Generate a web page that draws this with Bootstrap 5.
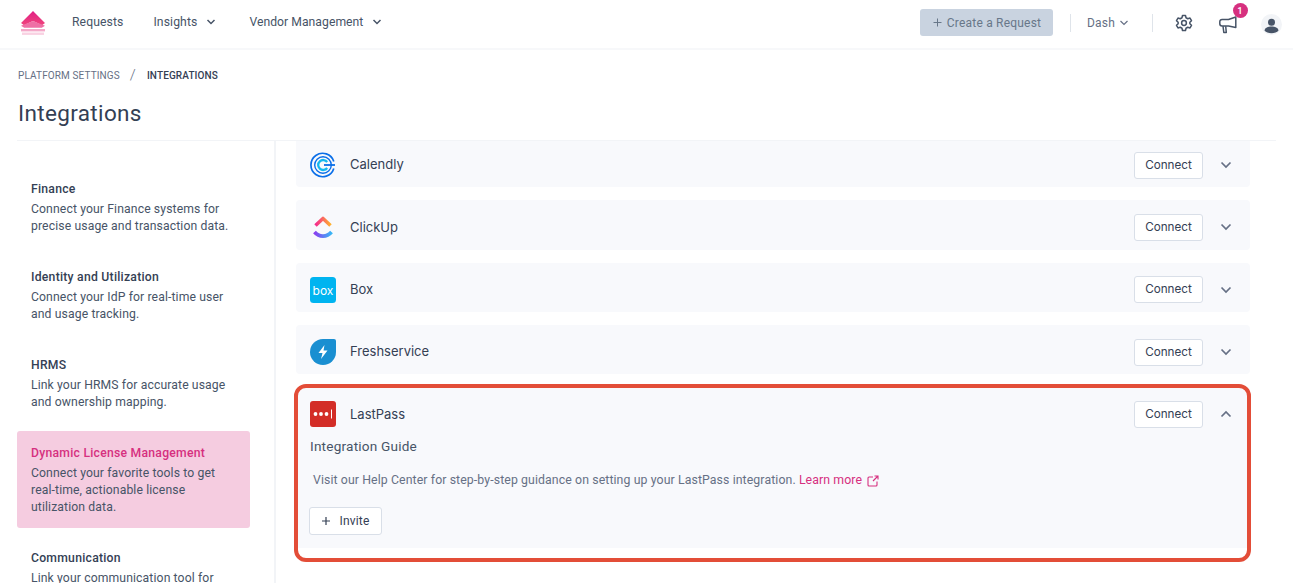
<!doctype html>
<html lang="en"><head><meta charset="utf-8"><title>Integrations</title>
<link rel="stylesheet" href="https://cdn.jsdelivr.net/npm/bootstrap@5.3.0/dist/css/bootstrap.min.css">
<style>
html,body{height:583px;overflow:hidden;background:#fff}
body{font-family:Roboto,"Liberation Sans",sans-serif;color:#344054;font-size:13px}
.topbar{height:50px;padding:0 11px 3px 20px;border-bottom:2px solid #f7f8fa;flex-wrap:nowrap}
.brand-mark{width:26px;height:26px;margin-right:26px;display:block}
.topnav{font-size:12.200px;color:#475467;letter-spacing:.1px}
.topnav .nav-link{color:#475467;padding:0;margin-right:30px;display:flex;align-items:center}
.topnav .nav-link:nth-child(2){margin-right:33px}
.topnav .nav-link:nth-child(3){margin-right:0;letter-spacing:.03px}
.chev{margin-left:9px}
.create-btn{background:#c9d3e0;border:0;color:#687789;font-size:12px;height:27px;width:133px;padding:0;border-radius:3px;letter-spacing:.2px}
.vsep{width:1px;height:18px;background:#dfe4ea}
.vsep-first{margin-left:17px}
.dash{font-size:12px;color:#667085;letter-spacing:.2px;width:81px;padding-left:16px}
.gear{margin-left:22px;margin-top:1px}
.notif{position:relative;width:22px;height:22px;margin-left:26px}
.notif svg{display:block;margin-top:4px}
.notif-badge{position:absolute;left:13.500px;top:-9px;width:15px;height:15px;border-radius:50%;background:#d6307f;color:#fff;font-size:9.500px;font-weight:500;padding:0;line-height:15px;text-align:center}
.avatar{margin-left:20px;margin-top:3px}
.crumbs{margin:14px 0 0 18px;font-size:10px;text-transform:uppercase;height:16px;align-items:center;letter-spacing:.12px}
.crumbs .breadcrumb-item{color:#667085;display:flex;align-items:center;padding:0}
.crumbs .breadcrumb-item::before{display:none}
.crumbs .slash{color:#667085;font-size:15px;margin:0 11px 0 10px;font-weight:300}
.crumbs .now{color:#344054;font-weight:500;padding:0}
.page-title{font-size:22.500px;font-weight:400;margin:18px 0 0 18px;line-height:30px;color:#344054;letter-spacing:.35px}
.split{margin:12px 17px 0;border-top:1px solid #f2f4f7;height:443px;overflow:hidden}
.side{width:259px;border-right:2px solid #f2f4f7;padding:26px 24px 0 0;flex:none}
.side-item{padding:13px 14px 12px;border-radius:3px;margin-bottom:8px;font-size:12.200px;line-height:17px;color:#475467;letter-spacing:.12px}
.side-item h6{font-size:12.200px;font-weight:500;color:#344054;line-height:18px;margin:0 0 3px;letter-spacing:.25px}
.side-item.on{background:#f5cce0}
.side-item.on h6{color:#d6307f}
.main-pane{padding:0 26px 0 20px;flex:1;min-width:0}
.row-card{background:#f8f9fc;border:0;border-radius:4px;margin-bottom:13px;color:#344054}
.row-card:first-child{margin-top:-3px}
.row-head{height:49.300px;padding:5px 18px 0 14px}
.row-name{font-family:Inter,sans-serif;font-size:13px;margin-left:14px;color:#344054}
.logo{width:26px;height:26px;display:block;flex:none}
.connect{font-family:Inter,sans-serif;font-size:11.700px;height:27px;width:69px;padding:1px 0 0;background:#fff;border:1px solid #d9dfe8;border-radius:3px;color:#344054;margin-right:17px}
.ring-note{position:absolute;inset:-3px -1px -14px -2px;border:4px solid #e34d38;border-radius:12px;pointer-events:none}
.guide-title{font-size:13.600px;color:#475467;margin:1px 0 0;padding:0 14px;line-height:18px;letter-spacing:.2px}
.guide-text{font-size:12.300px;color:#667085;margin:16px 0 0;padding:0 17px;line-height:18px;letter-spacing:.1px}
.guide-text a{color:#d6307f;text-decoration:none}
.ext{margin-left:2px}
.invite{font-size:12px;height:28px;width:73px;padding:0;margin:18px 0 13px 13px;background:#fff;border:1px solid #d9dfe8;border-radius:3px;color:#344054;letter-spacing:.2px}
</style></head>
<body>
<nav class="navbar topbar d-flex align-items-center">
  <svg class="brand-mark" viewBox="0 0 26 26"><defs><linearGradient id="lg1" x1="0" y1="0" x2="0" y2="1"><stop offset="0" stop-color="#e01f86"/><stop offset="1" stop-color="#f0457c"/></linearGradient></defs><path d="M1 13 13 1l12 12-3 2.300-9-4.300-9 4.300z" fill="url(#lg1)"/><path d="M1 15.800 13 11l12 4.800-3.200 2H4.200z" fill="#ee6fa5"/><rect x="1" y="19" width="24" height="2.400" fill="#f4a9c9"/><rect x="2" y="22.500" width="22" height="2.400" fill="#f9d1e2"/></svg>
  <div class="nav topnav align-items-center flex-nowrap">
    <a class="nav-link" href="#">Requests</a>
    <a class="nav-link" href="#">Insights<svg class="chev" width="10" height="6" viewBox="0 0 10 6"><path d="M1.500 1 5 4.500 8.500 1" fill="none" stroke="#475467" stroke-width="1.500"/></svg></a>
    <a class="nav-link" href="#">Vendor Management<svg class="chev" width="10" height="6" viewBox="0 0 10 6"><path d="M1.500 1 5 4.500 8.500 1" fill="none" stroke="#475467" stroke-width="1.500"/></svg></a>
  </div>
  <div class="ms-auto d-flex align-items-center">
    <button class="btn create-btn d-flex align-items-center justify-content-center gap-1"><svg width="11" height="11" viewBox="0 0 11 11"><path d="M5.500 1.500v8M1.500 5.500h8" stroke="#687789" stroke-width="1"/></svg>Create a Request</button>
    <span class="vsep vsep-first"></span>
    <span class="dash d-flex align-items-center">Dash<svg class="ms-1" width="10" height="6" viewBox="0 0 10 6"><path d="M1.500 1 5 4.500 8.500 1" fill="none" stroke="#667085" stroke-width="1.200"/></svg></span>
    <span class="vsep"></span>
    <svg class="gear d-block" width="18" height="18" viewBox="0 0 24 24" fill="none" stroke="#475467" stroke-width="2" stroke-linejoin="round"><circle cx="12" cy="12" r="3.200"/><path d="M10 2h4l.7 3 2.300 1.300 3-.9 2 3.500-2.200 2.100v2l2.200 2.100-2 3.500-3-.9-2.300 1.300-.7 3h-4l-.7-3-2.300-1.300-3 .9-2-3.500 2.200-2.100v-2L2 8.900l2-3.500 3 .9 2.300-1.300z"/></svg>
    <span class="notif d-block"><svg width="18" height="18" viewBox="0 0 18 18" fill="none" stroke="#475467" stroke-width="1.500" stroke-linejoin="round"><path d="M3 3.500h6.500L16.800 1v10.500L9.500 10H3A2.200 2.200 0 0 1 .8 7.800V5.700A2.200 2.200 0 0 1 3 3.500z"/><path d="M4 10.200 4.800 16.500H7.300L6.700 10.300"/></svg><span class="badge notif-badge">1</span></span>
    <svg class="avatar d-block" width="21" height="21" viewBox="0 0 21 21"><circle cx="10.500" cy="10.500" r="10.500" fill="#f2f4f7"/><circle cx="10.500" cy="8.200" r="3.500" fill="#475467"/><path d="M3.500 16.500c.5-3 3.500-4 7-4s6.500 1 7 4c-1.500 1.800-4 2.700-7 2.700s-5.500-.9-7-2.700z" fill="#475467"/></svg>
  </div>
</nav>
<nav aria-label="breadcrumb"><ol class="breadcrumb crumbs mb-0">
  <li class="breadcrumb-item">Platform Settings<span class="slash">/</span></li>
  <li class="breadcrumb-item now active">Integrations</li>
</ol></nav>
<h1 class="page-title">Integrations</h1>
<div class="split d-flex">
  <aside class="side">
    <div class="side-item"><h6>Finance</h6>Connect your Finance systems for precise usage and transaction data.</div>
    <div class="side-item"><h6>Identity and Utilization</h6>Connect your IdP for real-time user and usage tracking.</div>
    <div class="side-item"><h6>HRMS</h6>Link your HRMS for accurate usage and ownership mapping.</div>
    <div class="side-item on"><h6>Dynamic License Management</h6>Connect your favorite tools to get real-time, actionable license utilization data.</div>
    <div class="side-item"><h6>Communication</h6>Link your communication tool for</div>
  </aside>
  <main class="main-pane">
    <div class="card row-card"><div class="row-head d-flex align-items-center">
      <svg class="logo" viewBox="0 0 26 26" fill="none"><path d="M23.800 9.500A11.700 11.700 0 1 0 23.800 16.500" stroke="#0b6fe8" stroke-width="1.700"/><circle cx="13" cy="13" r="8.300" stroke="#0b6fe8" stroke-width="1.400"/><path d="M17.200 10A5 5 0 1 0 17.200 16" stroke="#14b8ee" stroke-width="2.300"/><path d="M14 13h11" stroke="#0b6fe8" stroke-width="1.800"/></svg>
      <span class="row-name">Calendly</span>
      <button class="btn connect ms-auto">Connect</button>
      <svg width="12" height="8" viewBox="0 0 12 8"><path d="M1.500 1.500 6 6l4.500-4.500" fill="none" stroke="#667085" stroke-width="1.700"/></svg>
    </div></div>
    <div class="card row-card"><div class="row-head d-flex align-items-center">
      <svg class="logo" viewBox="0 0 26 26" fill="none"><defs><linearGradient id="cu1" x1="0" x2="1"><stop offset="0" stop-color="#f5288f"/><stop offset="1" stop-color="#ffb02e"/></linearGradient><linearGradient id="cu2" x1="0" x2="1"><stop offset="0" stop-color="#8b3df0"/><stop offset="1" stop-color="#38b6f5"/></linearGradient></defs><path d="M5.500 11.500 13 4.500l7.500 7" stroke="url(#cu1)" stroke-width="3.600" stroke-linejoin="round"/><path d="M4.500 18c4.500 5.500 12.500 5.500 17 0" stroke="url(#cu2)" stroke-width="3.600"/></svg>
      <span class="row-name">ClickUp</span>
      <button class="btn connect ms-auto">Connect</button>
      <svg width="12" height="8" viewBox="0 0 12 8"><path d="M1.500 1.500 6 6l4.500-4.500" fill="none" stroke="#667085" stroke-width="1.700"/></svg>
    </div></div>
    <div class="card row-card"><div class="row-head d-flex align-items-center">
      <svg class="logo" viewBox="0 0 26 26"><rect width="26" height="26" rx="3.500" fill="#00b4f0"/><text x="13" y="17.500" text-anchor="middle" font-family="Inter,sans-serif" font-size="12" fill="#fff">box</text></svg>
      <span class="row-name">Box</span>
      <button class="btn connect ms-auto">Connect</button>
      <svg width="12" height="8" viewBox="0 0 12 8"><path d="M1.500 1.500 6 6l4.500-4.500" fill="none" stroke="#667085" stroke-width="1.700"/></svg>
    </div></div>
    <div class="card row-card"><div class="row-head d-flex align-items-center">
      <svg class="logo" viewBox="0 0 26 26"><path d="M13 0h11a2 2 0 0 1 2 2v11a13 13 0 1 1-13-13z" fill="#1a8fd1"/><path d="M14.500 6 8.500 14h4l-1.500 6 6.500-8.500h-4z" fill="#fff"/></svg>
      <span class="row-name">Freshservice</span>
      <button class="btn connect ms-auto">Connect</button>
      <svg width="12" height="8" viewBox="0 0 12 8"><path d="M1.500 1.500 6 6l4.500-4.500" fill="none" stroke="#667085" stroke-width="1.700"/></svg>
    </div></div>
    <div class="card row-card position-relative">
      <span class="ring-note"></span>
      <div class="row-head d-flex align-items-center">
        <svg class="logo" viewBox="0 0 26 26"><rect width="26" height="26" rx="3" fill="#d32d27"/><circle cx="5.500" cy="13" r="1.900" fill="#fff"/><circle cx="11" cy="13" r="1.900" fill="#fff"/><circle cx="16.500" cy="13" r="1.900" fill="#fff"/><rect x="21" y="8.500" width="1" height="9" fill="#fff"/></svg>
        <span class="row-name">LastPass</span>
        <button class="btn connect ms-auto">Connect</button>
        <svg width="12" height="8" viewBox="0 0 12 8"><path d="M1.500 6.500 6 2l4.500 4.500" fill="none" stroke="#667085" stroke-width="1.700"/></svg>
      </div>
      <h2 class="guide-title fw-normal">Integration Guide</h2>
      <p class="guide-text">Visit our Help Center for step-by-step guidance on setting up your LastPass integration. <a href="#">Learn more <svg class="ext" width="12" height="12" viewBox="0 0 12 12" fill="none" stroke="#d6307f" stroke-width="1.100"><path d="M6 2H2a1 1 0 0 0-1 1v7a1 1 0 0 0 1 1h7a1 1 0 0 0 1-1V6.500M7.500 1H11v3.500M11 1 6 6"/></svg></a></p>
      <div><button class="btn invite d-inline-flex align-items-center justify-content-center gap-2"><svg width="10" height="10" viewBox="0 0 10 10"><path d="M5 1v8M1 5h8" stroke="#344054" stroke-width="1.200"/></svg>Invite</button></div>
    </div>
  </main>
</div>
</body></html>
